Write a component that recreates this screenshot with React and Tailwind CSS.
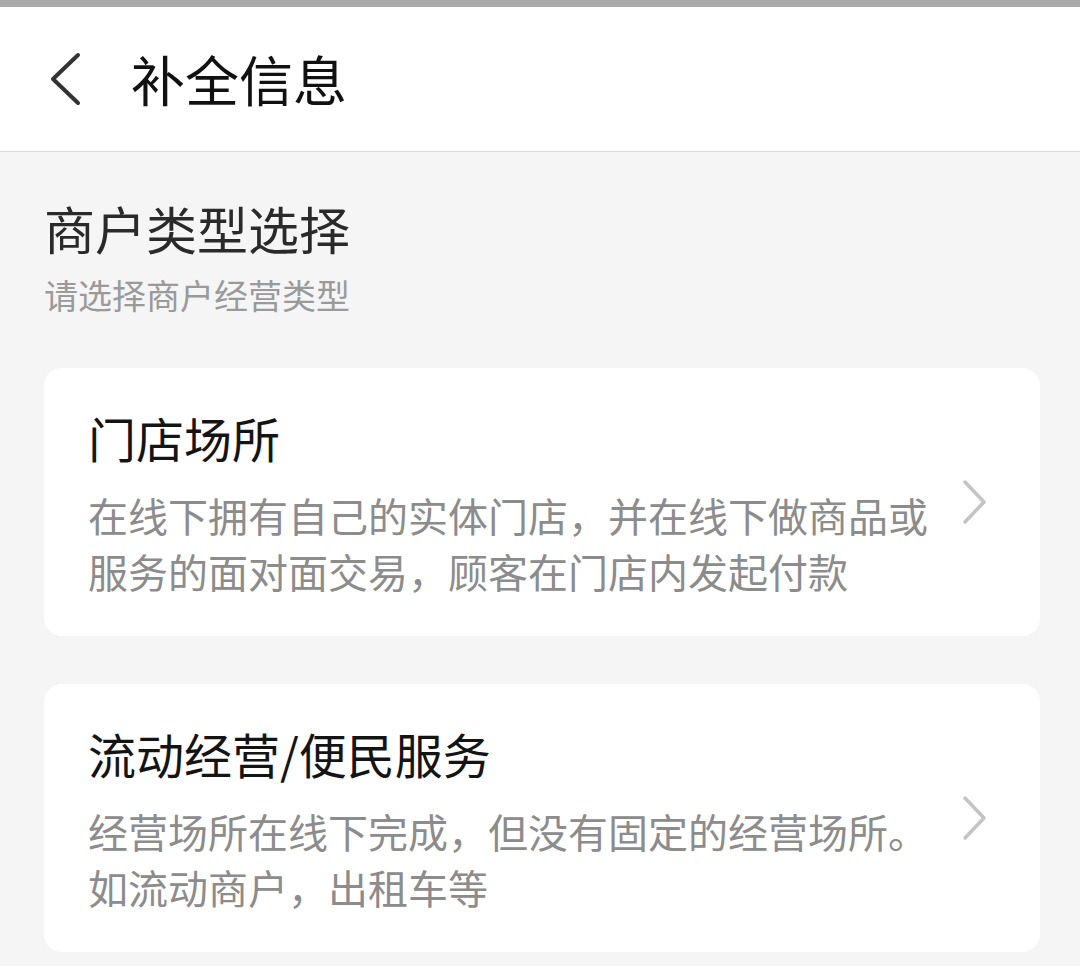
import React from "react";

const font = { fontFamily: '"Noto Sans CJK SC", "Noto Sans", sans-serif' };

function Chevron() {
  return (
    <svg width="26" height="46" viewBox="0 0 26 46" className="shrink-0">
      <path d="M3 3 L22 23 L3 43" fill="none" stroke="#c4c4c4" strokeWidth="3.5" strokeLinecap="round" strokeLinejoin="round" />
    </svg>
  );
}

function Card({ title, lines }) {
  return (
    <div className="bg-white rounded-[18px] flex items-center pl-[44px] pr-[52px] pt-[37px] pb-[37px]">
      <div className="flex-1">
        <div className="text-[48px] leading-[64px] text-[#141414]">{title}</div>
        <div className="mt-[18px] text-[40px] leading-[56px] text-[#8c8c8c] whitespace-nowrap">
          {lines.map((l, i) => (
            <div key={i}>{l}</div>
          ))}
        </div>
      </div>
      <Chevron />
    </div>
  );
}

export default function App() {
  return (
    <div className="w-[1080px] h-[966px] bg-[#f5f5f5] overflow-hidden" style={font}>
      <div className="h-[7px] bg-[#a9a9a9]" />
      <div className="h-[145px] bg-white border-b border-[#d8d8d8] flex items-center">
        <svg width="40" height="56" viewBox="0 0 40 56" className="ml-[45px]">
          <path d="M33 4 L8 28 L33 52" fill="none" stroke="#333" strokeWidth="4" strokeLinecap="round" strokeLinejoin="round" />
        </svg>
        <div className="ml-[46px] text-[54px] leading-none text-[#111]">补全信息</div>
      </div>
      <div className="px-[44px] pt-[44px]">
        <div className="text-[51px] leading-[64px] text-[#2a2a2a]">商户类型选择</div>
        <div className="mt-[13px] text-[34px] leading-[44px] text-[#9a9a9a]">请选择商户经营类型</div>
        <div className="mt-[51px] flex flex-col gap-[48px] w-[996px]">
          <Card
            title="门店场所"
            lines={["在线下拥有自己的实体门店，并在线下做商品或", "服务的面对面交易，顾客在门店内发起付款"]}
          />
          <Card
            title="流动经营/便民服务"
            lines={["经营场所在线下完成，但没有固定的经营场所。", "如流动商户，出租车等"]}
          />
        </div>
      </div>
    </div>
  );
}
